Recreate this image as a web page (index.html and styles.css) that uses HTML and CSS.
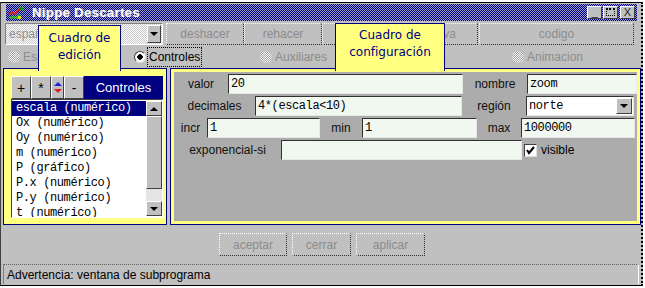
FILE: index.html
```html
<!DOCTYPE html>
<html lang="es">
<head>
    <meta charset="UTF-8">
    <title>Nippe Descartes</title>
    <link rel="stylesheet" href="styles.css">
</head>
<body>
<div class="window">
    <div class="titlebar">
        <svg class="app-icon" width="17" height="14" viewBox="0 0 17 14">
            <polyline points="1,9 4,6 7,8 10,4 13,3" fill="none" stroke="#e02020" stroke-width="2"/>
            <polyline points="2,12 6,11 9,12 12,9" fill="none" stroke="#20c020" stroke-width="2"/>
            <rect x="12" y="1" width="3" height="3" fill="#00a000"/>
            <rect x="10" y="10" width="3" height="3" fill="#e0e000"/>
            <rect x="3" y="3" width="2" height="2" fill="#4040ff"/>
        </svg>
        <span class="title">Nippe Descartes</span>
        <div class="title-buttons">
            <span class="tbtn">_</span>
            <span class="tbtn"><span class="box"></span></span>
            <span class="tbtn close">X</span>
        </div>
    </div>

    <div class="toolbar">
        <div class="combo">
            <span class="combo-text">español</span>
            <span class="combo-arrow"><span class="tri-down"></span></span>
        </div>
        <div class="tool w78">deshacer</div>
        <div class="tool w78">rehacer</div>
        <div class="tool w79">copiar</div>
        <div class="tool w77">nueva</div>
        <div class="tool wide">codigo</div>
    </div>

    <div class="modes">
        <div class="radio off"><span class="dot"></span>Espacio</div>
        <div class="radio on"><span class="dot"></span><span class="focus">Controles</span></div>
        <div class="radio off"><span class="dot"></span>Auxiliares</div>
        <div class="radio off"><span class="dot"></span>Gráficos</div>
        <div class="radio off"><span class="dot"></span>Animacion</div>
    </div>

    <div class="panels">
        <div class="panel panel-left">
            <div class="ctrl-bar">
                <span class="btn sq">+</span>
                <span class="btn sq">*</span>
                <span class="btn updown">
                    <span class="tri-up blue"></span>
                    <span class="tri-down red"></span>
                </span>
                <span class="btn sq">-</span>
                <span class="ctrl-head">Controles</span>
            </div>
            <div class="listbox">
                <ul class="items">
                    <li class="selected">escala (numérico)</li>
                    <li>Ox (numérico)</li>
                    <li>Oy (numérico)</li>
                    <li>m (numérico)</li>
                    <li>P (gráfico)</li>
                    <li>P.x (numérico)</li>
                    <li>P.y (numérico)</li>
                    <li>t (numérico)</li>
                </ul>
                <div class="scrollbar">
                    <span class="sbtn"><span class="tri-up"></span></span>
                    <span class="thumb"></span>
                    <span class="track"></span>
                    <span class="sbtn"><span class="tri-down"></span></span>
                </div>
            </div>
        </div>

        <div class="panel panel-right">
            <div class="config">
                <div class="row">
                    <span class="lbl" style="width:54px">valor</span>
                    <span class="field" style="width:235px">20</span>
                    <span class="lbl" style="width:64px">nombre</span>
                    <span class="field grow">zoom</span>
                </div>
                <div class="row">
                    <span class="lbl" style="width:81px">decimales</span>
                    <span class="field" style="width:207px">4*(escala&lt;10)</span>
                    <span class="lbl" style="width:64px">región</span>
                    <span class="select">
                        <span class="select-text">norte</span>
                        <span class="select-arrow"><span class="tri-down"></span></span>
                    </span>
                </div>
                <div class="row">
                    <span class="lbl" style="width:33px">incr</span>
                    <span class="field" style="width:113px">1</span>
                    <span class="lbl" style="width:42px">min</span>
                    <span class="field" style="width:115px">1</span>
                    <span class="lbl" style="width:44px">max</span>
                    <span class="field" style="width:114px">1000000</span>
                </div>
                <div class="row">
                    <span class="lbl" style="width:107px">exponencial-si</span>
                    <span class="field" style="width:241px"></span>
                    <span class="check">
                        <svg width="9" height="9" viewBox="0 0 9 9">
                            <polyline points="1,4 3,7 8,1" fill="none" stroke="#000" stroke-width="2"/>
                        </svg>
                    </span>
                    <span class="check-label">visible</span>
                </div>
            </div>
        </div>
    </div>

    <div class="actions">
        <div class="tool act w68">aceptar</div>
        <div class="tool act w59">cerrar</div>
        <div class="tool act w69">aplicar</div>
    </div>

    <div class="status">Advertencia: ventana de subprograma</div>

    <div class="tip tip-edit">Cuadro de<br>edición</div>
    <div class="tip tip-config">Cuadro de<br>configuración</div>
</div>
</body>
</html>
```

FILE: styles.css
```css
* {
    box-sizing: border-box;
}

body {
    margin: 0;
    background-color: #fff;
    font-family: "Liberation Sans", Arial, sans-serif;
    font-size: 12px;
    color: #000;
}

.window {
    position: relative;
    width: 643px;
    height: 284px;
    margin-top: 2px;
    border: 1px solid #000;
    border-left-color: #404040;
    border-right: 2px dotted #000;
    background-color: #c0c0c0;
    padding: 0 0 0 2px;
    display: flex;
    flex-direction: column;
}

/* title bar */
.titlebar {
    margin: 1px 0 0 3px;
    width: 631px;
    height: 17px;
    display: flex;
    align-items: center;
    background: repeating-conic-gradient(#000080 0 25%, #9898c8 0 50%) 0 0 / 2px 2px;
}

.app-icon {
    margin-left: 2px;
}

.title {
    margin-left: 7px;
    color: #fff;
    font-weight: bold;
    font-size: 13px;
    letter-spacing: 0.4px;
    text-shadow: 1px 0 0 #9090b0;
}

.title-buttons {
    margin-left: auto;
    display: flex;
    gap: 1px;
    margin-right: 2px;
}

.tbtn {
    width: 15px;
    height: 13px;
    background-color: #c0c0c0;
    border: 1px solid;
    border-color: #fff #404040 #404040 #fff;
    font-size: 11px;
    line-height: 11px;
    text-align: center;
    color: #202020;
}

.tbtn.close {
    margin-left: 1px;
}

.tbtn .box {
    display: inline-block;
    width: 9px;
    height: 8px;
    margin-top: 1px;
    border: 1px dotted #000;
    border-top-width: 2px;
}

/* toolbar */
.toolbar {
    margin-top: 2px;
    height: 22px;
    display: flex;
}

.combo {
    margin-left: 2px;
    width: 158px;
    display: flex;
    border: 1px solid;
    border-color: #808080 #fff #fff #808080;
    background: repeating-conic-gradient(#fff 0 25%, #c8c8c8 0 50%) 0 0 / 2px 2px;
}

.combo-text {
    flex: 1;
    padding: 3px 0 0 3px;
    color: #909090;
}

.combo-arrow {
    width: 14px;
    margin: 1px 1px 1px 0;
    background-color: #c0c0c0;
    border: 1px solid;
    border-color: #fff #404040 #404040 #fff;
    display: flex;
    align-items: center;
    justify-content: center;
}

.tool {
    height: 22px;
    display: flex;
    align-items: center;
    justify-content: center;
    color: #8c8c8c;
    background-color: #c0c0c0;
    border-top: 1px dotted #fff;
    border-left: 1px dotted #fff;
    border-right: 1px dotted #303030;
    border-bottom: 1px dotted #303030;
}

.toolbar .tool:nth-child(2) {
    margin-left: 3px;
}

.w77 { width: 77px; }
.w78 { width: 78px; }
.w79 { width: 79px; }
.w68 { width: 68px; }
.w59 { width: 59px; }
.w69 { width: 69px; }

.tool.wide {
    width: 155px;
    margin-left: 1px;
}

/* mode radios */
.modes {
    height: 23px;
    display: grid;
    grid-template-columns: repeat(5, 126px);
    padding-left: 5px;
    align-items: center;
}

.radio {
    display: flex;
    align-items: center;
    gap: 3px;
    color: #8c8c8c;
}

.dot {
    width: 12px;
    height: 12px;
    border-radius: 50%;
    background: repeating-conic-gradient(#fff 0 25%, #a0a0a0 0 50%) 0 0 / 2px 2px;
}

.radio.on {
    color: #000;
}

.radio.on .dot {
    background: radial-gradient(circle, #000 0 2.5px, #fff 3px);
    border: 1px solid;
    border-color: #404040 #e0e0e0 #e0e0e0 #404040;
}

.focus {
    border: 1px dotted #000;
    padding: 2px 1px 2px 1px;
    margin-left: -2px;
}

/* panels */
.panels {
    height: 157px;
    display: flex;
    gap: 3px;
}

.panel {
    border: 1px solid #000080;
    background-color: #ffff80;
}

.panel-left {
    width: 164px;
    padding: 7px 3px 6px 7px;
    display: flex;
    flex-direction: column;
}

.ctrl-bar {
    height: 23px;
    display: flex;
}

.btn {
    background-color: #c0c0c0;
    border: 1px solid;
    border-color: #fff #404040 #404040 #fff;
    display: flex;
    align-items: center;
    justify-content: center;
}

.btn.sq {
    width: 20px;
    font-size: 14px;
}

.btn.updown {
    width: 13px;
    flex-direction: column;
    gap: 3px;
}

.ctrl-head {
    flex: 1;
    background-color: #000080;
    color: #fff;
    font-size: 13px;
    display: flex;
    align-items: center;
    justify-content: center;
}

.tri-up,
.tri-down {
    width: 0;
    height: 0;
    border-left: 4px solid transparent;
    border-right: 4px solid transparent;
}

.tri-up {
    border-bottom: 4px solid #000;
}

.tri-down {
    border-top: 4px solid #000;
}

.tri-up.blue {
    border-bottom-color: #2020e0;
}

.tri-down.red {
    border-top-color: #e02020;
}

.listbox {
    flex: 1;
    display: flex;
    background-color: #fff;
    border: 1px solid;
    border-color: #404040 #fff #fff #404040;
    overflow: hidden;
}

.items {
    flex: 1;
    margin: 0;
    padding: 1px 0 0 0;
    list-style: none;
    font-family: "Liberation Mono", "Courier New", monospace;
    font-size: 12px;
    letter-spacing: -0.4px;
}

.items li {
    height: 15px;
    line-height: 15px;
    padding-left: 4px;
    white-space: nowrap;
}

.items li.selected {
    background-color: #000080;
    color: #fff;
}

.scrollbar {
    width: 16px;
    display: flex;
    flex-direction: column;
    padding: 1px 0;
}

.sbtn {
    height: 15px;
    background-color: #c0c0c0;
    border: 1px solid;
    border-color: #fff #404040 #404040 #fff;
    display: flex;
    align-items: center;
    justify-content: center;
}

.thumb {
    flex: 1;
    background-color: #c0c0c0;
    border: 1px solid;
    border-color: #fff #404040 #404040 #fff;
}

.track {
    height: 12px;
    background-color: #e4e4e4;
}

/* configuration */
.panel-right {
    flex: 1;
    padding: 3px;
}

.config {
    height: 100%;
    background-color: #acacac;
    padding-top: 2px;
    display: flex;
    flex-direction: column;
    gap: 2px;
}

.row {
    height: 20px;
    display: flex;
    align-items: stretch;
}

.lbl {
    display: flex;
    align-items: center;
    justify-content: center;
    color: #101010;
}

.field {
    background-color: #f0f8f0;
    border: 1px solid;
    border-color: #303030 #e8e8e8 #e8e8e8 #303030;
    font-family: "Liberation Mono", "Courier New", monospace;
    font-size: 12px;
    letter-spacing: -0.4px;
    line-height: 18px;
    padding-left: 2px;
}

.field.grow {
    flex: 1;
}

.select {
    width: 108px;
    display: flex;
    background-color: #fff;
    border: 1px solid;
    border-color: #303030 #e8e8e8 #e8e8e8 #303030;
}

.select-text {
    flex: 1;
    font-family: "Liberation Mono", "Courier New", monospace;
    font-size: 12px;
    letter-spacing: -0.4px;
    line-height: 18px;
    padding-left: 2px;
}

.select-arrow {
    width: 16px;
    margin: 1px;
    background-color: #c0c0c0;
    border: 1px solid;
    border-color: #fff #404040 #404040 #fff;
    display: flex;
    align-items: center;
    justify-content: center;
}

.check {
    width: 13px;
    height: 13px;
    margin: 4px 0 0 2px;
    background-color: #fff;
    border: 1px solid;
    border-color: #404040 #e0e0e0 #e0e0e0 #404040;
    display: flex;
    align-items: center;
    justify-content: center;
}

.check-label {
    margin-left: 4px;
    line-height: 20px;
}

/* bottom */
.actions {
    height: 39px;
    display: flex;
    justify-content: center;
    gap: 5px;
    padding-top: 8px;
}

.tool.act {
    height: 23px;
}

.status {
    height: 20px;
    margin-right: 2px;
    border-top: 1px dotted #606060;
    border-left: 1px solid #808080;
    border-right: 1px solid #fff;
    padding: 3px 0 0 3px;
    color: #000;
}

/* yellow tabs that lie over the toolbar */
.tip {
    position: absolute;
    background-color: #ffff80;
    border: 1px solid #000080;
    border-bottom: none;
    color: #000080;
    font-family: "DejaVu Sans", Verdana, sans-serif;
    font-size: 12px;
    line-height: 17px;
    text-align: center;
}

.tip-edit {
    left: 37px;
    top: 22px;
    width: 83px;
    height: 46px;
    padding-top: 4px;
}

.tip-config {
    left: 334px;
    top: 20px;
    width: 110px;
    height: 48px;
    padding-top: 3px;
}
```
